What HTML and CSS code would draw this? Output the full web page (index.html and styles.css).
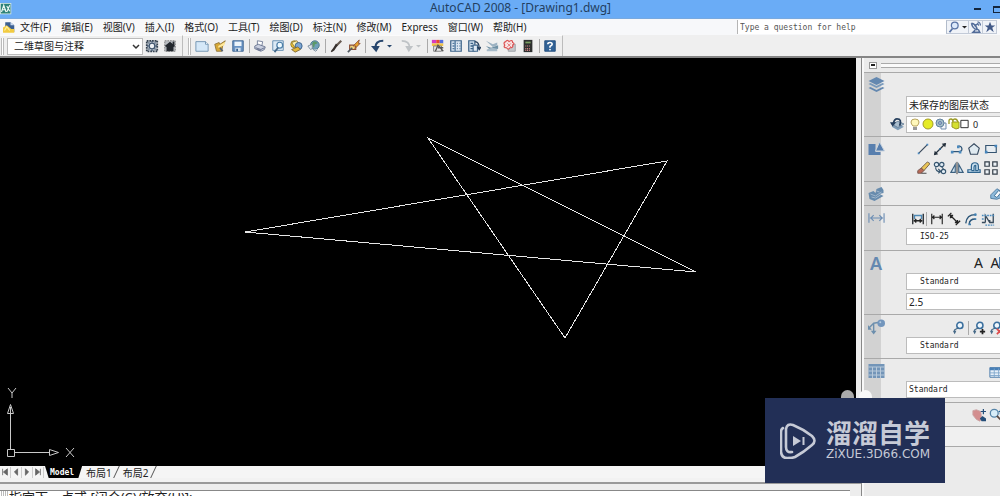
FILE: index.html
```html
<!DOCTYPE html>
<html lang="zh-CN">
<head>
<meta charset="utf-8">
<title>AutoCAD 2008 - [Drawing1.dwg]</title>
<link rel="stylesheet" href="styles.css">
</head>
<body>
<svg class="defs" aria-hidden="true">
  <symbol id="app" viewBox="0 0 16 16"><rect width="15" height="15" fill="#e4f0ec"/><path d="M1 1h13v13H1z" fill="#2b8178"/><path d="M2 12 5 3l3 9M9 4l4 7M9 12l4-9M3 9h5" fill="none" stroke="#eef8f5" stroke-width="1.5"/></symbol>
  <symbol id="dwg" viewBox="0 0 16 16"><path d="M3 1h7l5 4v9H3z" fill="#3b5f91"/><path d="M10 1v4h5" fill="#c9daf0"/><path d="m0 8 5-3 6 5h4v5H0z" fill="#f2cb41"/><path d="m2 12 3-5 4 5" fill="none" stroke="#fff2a6" stroke-width="1.5"/></symbol>
  <symbol id="gear" viewBox="0 0 16 16"><path d="M2 2h12v12H2z" fill="#c4ccd5" stroke="#354250" stroke-width="2" stroke-dasharray="2 1"/><circle cx="8" cy="8" r="3.3" fill="#edf1f5" stroke="#40566f" stroke-width="1.6"/><path d="M8 2v2M8 12v2M2 8h2M12 8h2M4 4l1 1M11 11l1 1M12 4l-1 1M5 11l-1 1" stroke="#40566f" stroke-width="1.5"/></symbol>
  <symbol id="home" viewBox="0 0 16 16"><path d="M2 2h12v12H2z" fill="#b9bdc2" stroke="#777" stroke-dasharray="2 1"/><path d="m2 8 6-5 6 5-2 1v5H4V9z" fill="#22272d"/><path d="M11 3h2v4h-2z" fill="#22272d"/></symbol>
  <symbol id="new" viewBox="0 0 16 16"><path d="M1 3h11l3 3v8H1z" fill="#d5e8f8" stroke="#6b8fae"/><path d="M12 3v3h3" fill="#fff" stroke="#6b8fae"/></symbol>
  <symbol id="open" viewBox="0 0 16 16"><path d="m2 6 5-2 1 2 6-4-3 6-1 6H4z" fill="#d7a837" stroke="#8e7339"/><path d="m6 8 8-5-1 4-7 3z" fill="#ffe89b"/><path d="m8 10 3 4" stroke="#536171" stroke-width="2"/></symbol>
  <symbol id="save" viewBox="0 0 16 16"><path d="M2 2h12v12H2z" fill="#6a94c4" stroke="#3b628e"/><path d="M4 3h8v5H4z" fill="#edf5fb"/><path d="M5 10h6v4H5z" fill="#d5e2ed"/><path d="M6 11h2v3H6z" fill="#315d8e"/></symbol>
  <symbol id="print" viewBox="0 0 16 16"><path d="m5 2 6 1-1 5-5-1z" fill="#fff" stroke="#6b7792"/><path d="m2 8 4-2 8 3-1 3-4 2-7-3z" fill="#c9cfdf" stroke="#67728e"/><path d="m3 10 6 2 4-2M5 12l4 1" fill="none" stroke="#5b6684"/></symbol>
  <symbol id="preview" viewBox="0 0 16 16"><path d="M2 2h12v11H2z" fill="#dceaf5" stroke="#5c88ad"/><circle cx="10" cy="7" r="3.3" fill="#eefaff" stroke="#4d7fa8" stroke-width="1.4"/><path d="m8 10-4 5" stroke="#426789" stroke-width="2"/></symbol>
  <symbol id="publish" viewBox="0 0 16 16"><circle cx="6" cy="6" r="4" fill="#f2c52f" stroke="#8d792c"/><path d="m3 4 6-2 3 5-5 3z" fill="#fff4b0" stroke="#917c38"/><circle cx="11" cy="8" r="4" fill="#7da5d2" stroke="#355c85"/><path d="m3 12 7-3 3 3-6 3z" fill="#e1b738" stroke="#7e6530"/></symbol>
  <symbol id="globe" viewBox="0 0 16 16"><circle cx="9" cy="7" r="5" fill="#6fa0b8" stroke="#49748a"/><path d="M7 3q4-1 5 2l-3 1-1 4-3-3z" fill="#5c9968"/><path d="m1 8 5-2v5l-2 1zM7 12l3 2 2-2" fill="#dfe7eb" stroke="#789"/></symbol>
  <symbol id="brush" viewBox="0 0 16 16"><path d="m14 2-6 6" stroke="#665a50" stroke-width="2.5"/><path d="m10 7-4 6-3 2-1-1 3-4 3-5z" fill="#36302d"/></symbol>
  <symbol id="block" viewBox="0 0 16 16"><path d="M3 7h7v5H3z" fill="#f0d47e" stroke="#8b5038" stroke-width="1.300"/><path d="m7 8 7-7-1 4h2l-6 6 1-3z" fill="#e9a22c" stroke="#8b5038"/><path d="m1 15 5-5" stroke="#4f5860" stroke-width="2"/></symbol>
  <symbol id="undo" viewBox="0 0 16 16"><path d="M14 2Q5 2 5 10" fill="none" stroke="currentColor" stroke-width="2.5"/><path d="M0 8h10l-4 7z" fill="currentColor"/></symbol>
  <symbol id="redo" viewBox="0 0 16 16"><path d="M2 2q9 0 9 8" fill="none" stroke="currentColor" stroke-width="2"/><path d="M6 8h9l-5 7z" fill="currentColor"/></symbol>
  <symbol id="caret" viewBox="0 0 8 16"><path d="M2 7h5L4.500 9.500z" fill="currentColor"/></symbol>
  <symbol id="props" viewBox="0 0 16 16"><path d="M1 1h5v4H1z" fill="#d53dc1"/><path d="M6 1h4v4H6z" fill="#e94632"/><path d="M10 1h4v4h-4z" fill="#536fe0"/><path d="M1 5h13v3H1z" fill="#f3c64a"/><path d="M3 8h9v6H3z" fill="#e8e8e8" stroke="#777"/><path d="m5 14 3-7 6 7M8 10h6" fill="none" stroke="#555" stroke-width="1.5"/></symbol>
  <symbol id="center" viewBox="0 0 16 16"><path d="M2 2h12v12H2z" fill="#dce7f2" stroke="#3d6388" stroke-width="1.4"/><path d="M7 2v12M4 5h2M4 8h2M4 11h2M9 5h1M12 5h1M9 8h1M12 8h1M9 11h1M12 11h1" stroke="#547ba0" stroke-width="1.6"/></symbol>
  <symbol id="palettes" viewBox="0 0 16 16"><path d="M2 2h7v12H2z" fill="#cfdfed" stroke="#3c6286" stroke-width="1.4"/><path d="M4 5h3M4 8h3M4 11h3" stroke="#3c6286" stroke-width="1.5"/><path d="M7 7h5v7H7z" fill="#dfe9f3" stroke="#43698d" stroke-width="1.4"/><path d="M9 3q5 0 5 8M12 9l2 3 2-3" fill="none" stroke="#263f5d" stroke-width="1.500"/></symbol>
  <symbol id="sheets" viewBox="0 0 16 16"><path d="m1 2 8 4 5-2v3l-5 2z" fill="#9cb2c2"/><path d="m1 8 6 2 8-3v4l-8 2z" fill="#6f91a5"/><path d="m2 12 6-2 6 1v3H2z" fill="#a6bac8"/></symbol>
  <symbol id="markup" viewBox="0 0 16 16"><path d="M6 6h8v8H6z" fill="#c5c8cc" stroke="#9a9da2"/><path d="M3 3q2-3 4 0 4-3 4 1 3 1 0 3 1 3-3 3-2 3-4 0-4 0-2-3-2-3 1-4z" fill="#f9e5e5" stroke="#dc5555" stroke-width="1.4"/><path d="m5 5 4 4M9 5 5 9" stroke="#e36b6b"/></symbol>
  <symbol id="calc" viewBox="0 0 16 16"><path d="M3 1h10v14H3z" fill="#2e3030"/><path d="M5 3h6v2H5z" fill="#7b9f62"/><path d="M5 8h6M5 11h6M5 13h6" stroke="#e88f8f" stroke-width="1.4" stroke-dasharray="1 1"/></symbol>
  <symbol id="help" viewBox="0 0 16 16"><path d="M2 2h12v12H2z" fill="#326397" stroke="#1f4b7c"/><path d="M5.500 6q0-2 2.500-2t2.500 2Q10.500 7 8 8.500V10" fill="none" stroke="#fff" stroke-width="1.8"/><circle cx="8" cy="12" r="1" fill="#fff"/></symbol>
  <symbol id="search" viewBox="0 0 16 16"><circle cx="9" cy="6" r="4.500" fill="#dbe8fa" stroke="#5873a5" stroke-width="1.7"/><path d="m6 10-4 5" stroke="#5873a5" stroke-width="2.4"/></symbol>
  <symbol id="comm" viewBox="0 0 16 16"><path d="M2 3q1 7 8 9M2 3q5 0 8 9M6 7l5-4M7 12l-3 3h9l-2-4" fill="none" stroke="#526c99" stroke-width="2"/><path d="M10 1q4 1 4 5M10 4l2 2" fill="none" stroke="#526c99" stroke-width="1.500"/></symbol>
  <symbol id="star" viewBox="0 0 16 16"><path d="m8 1 2 5h5l-4 3 2 6-5-4-5 4 2-6-4-3h5z" fill="#415987"/></symbol>
  <symbol id="layers" viewBox="0 0 16 16"><path d="m0 4 8-4 8 4-8 4z" fill="#6488b0"/><path d="m0 7 2-1 6 3 6-3 2 1-8 4z" fill="#7899bb"/><path d="m0 11 2-1 6 3 6-3 2 1-8 4z" fill="#6488b0"/></symbol>
  <symbol id="layerback" viewBox="0 0 16 16"><path d="m2 11 6-3 8 3-7 4z" fill="#7f9db8"/><path d="m2 8 7-3 7 3-7 4z" fill="#a9bdce" stroke="#678099"/><path d="M11 10q3-8-3-8-3 0-4 5" fill="none" stroke="#263f5d" stroke-width="2"/><path d="M0 6h7l-4 5z" fill="#263f5d"/></symbol>
  <symbol id="bulb" viewBox="0 0 12 12"><path d="M4 8Q2 6 2 4q0-3 4-3t4 3q0 2-2 4z" fill="#fff8bb" stroke="#b7a35d"/><path d="M4 9h4v3H4z" fill="#999"/></symbol>
  <symbol id="sun" viewBox="0 0 12 12"><circle cx="6" cy="6" r="5" fill="#e5eb25" stroke="#a29c26"/></symbol>
  <symbol id="freeze" viewBox="0 0 12 12"><path d="M6 5h5v6H6z" fill="#f4f6f8" stroke="#758fae"/><circle cx="5" cy="5" r="4" fill="#a5bfc7" stroke="#6383a0"/><circle cx="5" cy="5" r="1.500" fill="none" stroke="#687eb0"/></symbol>
  <symbol id="lock" viewBox="0 0 12 12"><path d="M1 6V3q0-2 2-2t2 3M5 5V3q0-2 2-2t3 3" fill="none" stroke="#9b9a25" stroke-width="1.300"/><path d="M4 4h7v6l-3 1-4-2z" fill="#d5df31" stroke="#9b9a25"/></symbol>
  <symbol id="swatch" viewBox="0 0 12 12"><path d="M2 2h8v8H2z" fill="#fff" stroke="#222"/></symbol>
  <symbol id="shapes" viewBox="0 0 16 16"><path d="M0 3h7v11H0zM8 11h4v3H5v-3z" fill="#587fae"/><path d="m11 1 5 9H7z" fill="#587fae" stroke="#c9d4df"/></symbol>
  <symbol id="line" viewBox="0 0 16 16"><path d="m3 13 10-10" stroke="#39495b" stroke-width="1.5"/><path d="M2 12h2v2H2zM12 2h2v2h-2z" fill="#4a8bc4"/></symbol>
  <symbol id="xline" viewBox="0 0 16 16"><path d="m2 14 12-12" stroke="#26323e" stroke-width="1.500"/><path d="m1 15 1-5 4 4zM15 1l-1 5-4-4z" fill="#26323e"/><path d="M7 7h2v2H7z" fill="#30699a"/></symbol>
  <symbol id="pline" viewBox="0 0 16 16"><path d="M2 11h9q4-1 2-5-1-2-4-1" fill="none" stroke="#315779" stroke-width="1.500"/><path d="M1 10h3v3H1zM10 10h3v3h-3zM8 4h3v3H8z" fill="#4c8abd"/></symbol>
  <symbol id="poly" viewBox="0 0 16 16"><path d="m8 2 6 5-2 7H4L2 7z" fill="#e0eaf0" stroke="#384b60" stroke-width="1.300"/></symbol>
  <symbol id="rect" viewBox="0 0 16 16"><path d="M2 4h12v8H2z" fill="#e7edf2" stroke="#345370" stroke-width="1.300"/><path d="M12 3h3v3h-3zM1 10h3v3H1z" fill="#4584bb"/></symbol>
  <symbol id="erase" viewBox="0 0 16 16"><path d="m6 8 7-7 3 2-7 8z" fill="#eac557" stroke="#6b5946"/><path d="m2 11 4-3 3 3-3 3H2z" fill="#b96957" stroke="#74534c"/><path d="M6 14h6" stroke="#333"/></symbol>
  <symbol id="copy" viewBox="0 0 16 16"><circle cx="4" cy="4" r="2.500" fill="#e2edf5" stroke="#37566f" stroke-width="1.300"/><circle cx="10" cy="4" r="2.500" fill="#e2edf5" stroke="#37566f" stroke-width="1.300"/><circle cx="12" cy="12" r="2.500" fill="#e2edf5" stroke="#37566f" stroke-width="1.300"/><path d="M3 7q0 5 5 5M6 9l3 3-3 2M10 7l2 2" fill="none" stroke="#37566f" stroke-width="1.300"/></symbol>
  <symbol id="mirror" viewBox="0 0 16 16"><path d="M6 4v9H1zM10 4v9h5z" fill="#d9eaf5" stroke="#3c607f" stroke-width="1.300"/><path d="M8 1v14" stroke="#222"/></symbol>
  <symbol id="offset" viewBox="0 0 16 16"><path d="M1 13v-3h4V6q0-4 4-4t4 4v4h2v3z" fill="#cae0ef" stroke="#2e648e" stroke-width="1.400"/><path d="M5 11h3V7q0-2 2-2v6h3" fill="none" stroke="#2e648e" stroke-width="1.300"/></symbol>
  <symbol id="array" viewBox="0 0 16 16"><path d="M1 1h5v5H1zM10 1h5v5h-5zM1 10h5v5H1zM10 10h5v5h-5z" fill="#edf2f6" stroke="#353f4a" stroke-width="1.400"/></symbol>
  <symbol id="solid" viewBox="0 0 16 16"><path d="m0 7 5-2 2 2 1-4 5-2 2 3v3l-4 1 4 2-9 5-5-2z" fill="#678bad"/><path d="m2 8 5 2 6-4M3 11l4 1 5-3M8 5l3 1" fill="none" stroke="#a1b7cc"/></symbol>
  <symbol id="pencil" viewBox="0 0 16 16"><path d="m2 9 7-7 5 3v7l-5 2-7-1z" fill="#8cb9da" stroke="#48779e"/><path d="m6 10 5-6 3 2-5 6z" fill="#f6f9fb" stroke="#376990"/></symbol>
  <symbol id="dimblue" viewBox="0 0 18 16"><path d="M1 3v10M17 3v10M2 8h14M6 5 3 8l3 3M12 5l3 3-3 3" fill="none" stroke="#6d8eb4" stroke-width="1.200"/></symbol>
  <symbol id="qdim" viewBox="0 0 16 16"><path d="M2 2v12M14 2v12" stroke="#23272b" stroke-width="1.500"/><path d="M3 4h10M4 3v5M12 3v5" stroke="#4d89b5" stroke-width="1.500"/><path d="M3 10h10M6 8l-2 2 2 2M10 8l2 2-2 2" fill="none" stroke="#222" stroke-width="1.500"/></symbol>
  <symbol id="dim" viewBox="0 0 16 16"><path d="M2 2v12M14 2v12M3 6h10M5 4 3 6l2 2M11 4l2 2-2 2" fill="none" stroke="#222" stroke-width="1.300"/></symbol>
  <symbol id="aligned" viewBox="0 0 16 16"><path d="m1 5 4-4M10 15l5-5M4 4l8 8M4 7V4h3M9 12h3V9" fill="none" stroke="#222" stroke-width="1.500"/></symbol>
  <symbol id="arc" viewBox="0 0 16 16"><path d="M2 13Q3 3 13 3M6 14q0-6 7-6" fill="none" stroke="#2d5678" stroke-width="1.600"/><circle cx="13" cy="3" r="1.500" fill="#4281b2"/><path d="M5 13h3v2H5zM12 7h2v2h-2z" fill="#4281b2"/></symbol>
  <symbol id="ordinate" viewBox="0 0 16 16"><path d="M5 12V4l5 8h4V2M5 12H1M10 12V9" fill="none" stroke="#394b5c" stroke-width="1.500"/><path d="M1 4h14M1 8h3M5 15h10" stroke="#4a8abd" stroke-width="1.500" stroke-dasharray="2 1"/></symbol>
  <symbol id="leader" viewBox="0 0 18 16"><path d="m1 9 5-5 6-1M6 4v10" fill="none" stroke="#6d8fad" stroke-width="1.500"/><path d="M0 6v5h4zM3 12h6l-3 4z" fill="#6d8fad"/><circle cx="14" cy="4" r="4" fill="#7396bd"/><circle cx="13" cy="3" r="1" fill="#b8cce0"/></symbol>
  <symbol id="callout" viewBox="0 0 16 16"><circle cx="9" cy="5" r="3.500" fill="#eff7fc" stroke="#3b6f9e" stroke-width="1.800"/><path d="m7 8-4 2v4" fill="none" stroke="#476a88" stroke-width="1.300"/><path d="M1 11h4l-2 4z" fill="#476a88"/></symbol>
  <symbol id="table" viewBox="0 0 16 16"><path d="M0 1h16v14H0z" fill="#7395b8"/><path d="M0 4h16M0 8h16M0 12h16M4 4v11M8 4v11M12 4v11" stroke="#b8c9da"/></symbol>
  <symbol id="minitable" viewBox="0 0 16 16"><path d="M1 3h14v11H1z" fill="#e7f0f9" stroke="#3e71a3"/><path d="M1 3h14v3H1z" fill="#477fb7"/><path d="M1 9h14M1 12h14M6 4v10M11 4v10" stroke="#7ea6ca"/></symbol>
  <symbol id="pan" viewBox="0 0 16 16"><path d="m1 3 4-1 5 2 1 8-2 3-4-2-4-5z" fill="#d38e8f" stroke="#c9a4a4"/><path d="M13 1v6M10 4h6" stroke="#244d78" stroke-width="1.400"/><path d="m9 12 3-3 4 3v3h-5z" fill="#244d78"/></symbol>
  <symbol id="zoomicon" viewBox="0 0 16 16"><circle cx="6" cy="6" r="4.500" fill="#d8edf8" stroke="#5684a8" stroke-width="1.500"/><path d="m9 9 5 5" stroke="#594741" stroke-width="2"/><path d="M13 2v5M11 4h5" stroke="#246497" stroke-width="1.400"/></symbol>
</svg>
<div class="window">
  <header class="titlebar">
    <svg class="i16"><use href="#app"/></svg>
    <h1>AutoCAD 2008 - [Drawing1.dwg]</h1>
    <div class="winbtns"><button aria-label="最小化"><span class="min"></span></button><button aria-label="最大化"><span class="max"></span></button></div>
  </header>
  <nav class="menubar">
    <svg class="docicon"><use href="#dwg"/></svg>
    <button>文件(F)</button><button>编辑(E)</button><button>视图(V)</button><button>插入(I)</button><button>格式(O)</button><button>工具(T)</button><button>绘图(D)</button><button>标注(N)</button><button>修改(M)</button><button>Express</button><button>窗口(W)</button><button>帮助(H)</button>
    <div class="infocenter">
      <input class="mono" type="text" aria-label="帮助搜索" placeholder="Type a question for help">
      <button class="find" aria-label="搜索"><svg class="i14"><use href="#search"/></svg><svg class="caret"><use href="#caret"/></svg></button><button aria-label="通讯中心"><svg class="i14"><use href="#comm"/></svg></button><button aria-label="收藏夹"><svg class="i14"><use href="#star"/></svg></button>
    </div>
  </nav>
  <div class="toolbars">
    <div class="toolbar">
      <span class="grip"></span>
      <div class="workspace"><select aria-label="工作空间"><option>二维草图与注释</option></select><svg viewBox="0 0 8 8"><path d="m1 2 3 3 3-3" fill="none" stroke="#333" stroke-width="1.500"/></svg></div>
      <button class="tool" aria-label="工作空间设置"><svg><use href="#gear"/></svg></button><button class="tool" aria-label="我的工作空间"><svg><use href="#home"/></svg></button>
    </div>
    <div class="toolbar standard">
      <span class="grip"></span>
      <button class="tool" aria-label="新建"><svg><use href="#new"/></svg></button><button class="tool" aria-label="打开"><svg><use href="#open"/></svg></button><button class="tool" aria-label="保存"><svg><use href="#save"/></svg></button><i class="sep"></i>
      <button class="tool" aria-label="打印"><svg><use href="#print"/></svg></button><button class="tool" aria-label="打印预览"><svg><use href="#preview"/></svg></button><button class="tool" aria-label="发布"><svg><use href="#publish"/></svg></button><button class="tool" aria-label="三维 DWF"><svg><use href="#globe"/></svg></button><i class="sep"></i>
      <button class="tool" aria-label="特性匹配"><svg><use href="#brush"/></svg></button><button class="tool" aria-label="块编辑器"><svg><use href="#block"/></svg></button><i class="sep"></i>
      <button class="tool history undo" aria-label="放弃"><svg><use href="#undo"/></svg><svg class="caret"><use href="#caret"/></svg></button><button class="tool history redo" aria-label="重做"><svg><use href="#redo"/></svg><svg class="caret"><use href="#caret"/></svg></button><i class="sep"></i>
      <button class="tool" aria-label="特性"><svg><use href="#props"/></svg></button><button class="tool" aria-label="设计中心"><svg><use href="#center"/></svg></button><button class="tool" aria-label="工具选项板"><svg><use href="#palettes"/></svg></button><button class="tool" aria-label="图纸集"><svg><use href="#sheets"/></svg></button><button class="tool" aria-label="标记集"><svg><use href="#markup"/></svg></button><button class="tool" aria-label="计算器"><svg><use href="#calc"/></svg></button><i class="sep"></i>
      <button class="tool" aria-label="帮助"><svg><use href="#help"/></svg></button>
    </div>
  </div>
  <div class="main">
    <main class="document">
      <div class="canvas">
        <svg class="drawing" role="img" aria-label="五角星"><path d="M428 80 696 214 245 174 667 103 565 280Z" fill="none" stroke="#e6e6e6"/></svg>
        <svg class="ucs" viewBox="0 0 80 80"><g fill="none" stroke="#c9c9c9"><path d="M7.500 64.500h7v7h-7zM10.500 64V22M14.500 67.500H50M7.500 28.500l3-9 3 9zM49.500 64.500l9 3-9 3zM8 3l4 5 4-5M12 8v5M66 63l8 9M74 63l-8 9"/></g></svg>
      </div>
      <div class="tabs">
        <div class="nav"><button aria-label="第一个"><svg viewBox="0 0 10 10"><path d="M2 1v8M8 1v8L3 5z"/></svg></button><button aria-label="上一个"><svg viewBox="0 0 10 10"><path d="M7 1v8L3 5z"/></svg></button><button aria-label="下一个"><svg viewBox="0 0 10 10"><path d="M3 1v8l4-4z"/></svg></button><button aria-label="最后一个"><svg viewBox="0 0 10 10"><path d="M2 1v8l5-4zM8 1v8"/></svg></button></div>
        <button class="model mono">Model</button><button class="layout">布局1</button><i class="slash"></i><button class="layout">布局2</button><i class="slash"></i>
      </div>
      <div class="command"><div class="log"><span class="grip"></span><span class="grip"></span><p>指定下一点或 [闭合(C)/放弃(U)]:</p></div></div>
    </main>
    <aside class="dock">
      <div class="dockhead"><button aria-label="最小化面板"></button><span></span></div>
      <section class="panel layerpanel"><svg class="mark"><use href="#layers"/></svg><div class="body">
        <select class="field" aria-label="图层状态"><option>未保存的图层状态</option></select>
        <div class="layerrow"><button class="tool" aria-label="上一个图层"><svg><use href="#layerback"/></svg></button><button class="field layer" aria-label="图层 0"><svg><use href="#bulb"/></svg><svg><use href="#sun"/></svg><svg><use href="#freeze"/></svg><svg><use href="#lock"/></svg><svg class="sw"><use href="#swatch"/></svg><span>0</span></button></div>
      </div></section>
      <section class="panel drawpanel"><svg class="mark"><use href="#shapes"/></svg><div class="body">
        <div class="row"><button aria-label="直线"><svg><use href="#line"/></svg></button><button aria-label="构造线"><svg><use href="#xline"/></svg></button><button aria-label="多段线"><svg><use href="#pline"/></svg></button><button aria-label="正多边形"><svg><use href="#poly"/></svg></button><button aria-label="矩形"><svg><use href="#rect"/></svg></button></div>
        <div class="row"><button aria-label="删除"><svg><use href="#erase"/></svg></button><button aria-label="复制"><svg><use href="#copy"/></svg></button><button aria-label="镜像"><svg><use href="#mirror"/></svg></button><button aria-label="偏移"><svg><use href="#offset"/></svg></button><button aria-label="阵列"><svg><use href="#array"/></svg></button></div>
      </div></section>
      <section class="panel slim"><svg class="mark"><use href="#solid"/></svg><div class="body"><div class="row end"><button aria-label="编辑"><svg><use href="#pencil"/></svg></button></div></div></section>
      <section class="panel dims"><svg class="mark"><use href="#dimblue"/></svg><div class="body">
        <div class="row"><button aria-label="快速标注"><svg><use href="#qdim"/></svg></button><i class="sep"></i><button aria-label="线性"><svg><use href="#dim"/></svg></button><button aria-label="对齐"><svg><use href="#aligned"/></svg></button><button aria-label="弧长"><svg><use href="#arc"/></svg></button><button aria-label="坐标"><svg><use href="#ordinate"/></svg></button></div>
        <select class="field mono inset" aria-label="标注样式"><option>ISO-25</option></select>
      </div></section>
      <section class="panel text"><span class="mark letter">A</span><div class="body">
        <div class="row end"><button class="glyph" aria-label="多行文字">A</button><button class="glyph" aria-label="单行文字">A<i></i></button></div>
        <select class="field mono inset" aria-label="文字样式"><option>Standard</option></select>
        <input class="field" aria-label="文字高度" value="2.5">
      </div></section>
      <section class="panel"><svg class="mark"><use href="#leader"/></svg><div class="body">
        <div class="row end"><button aria-label="多重引线"><svg><use href="#callout"/></svg></button><i class="sep"></i><button aria-label="添加引线"><svg viewBox="0 0 16 16"><use href="#callout"/><path d="M12 9v6M9 12h6" stroke="#222" stroke-width="2"/></svg></button><button aria-label="删除引线"><svg viewBox="0 0 16 16"><use href="#callout"/><path d="m9 9 6 6M15 9l-6 6" stroke="#dd4c4c" stroke-width="2"/></svg></button></div>
        <select class="field mono inset" aria-label="引线样式"><option>Standard</option></select>
      </div></section>
      <section class="panel"><svg class="mark"><use href="#table"/></svg><div class="body">
        <div class="row end"><button aria-label="表格"><svg><use href="#minitable"/></svg></button></div>
        <select class="field mono" aria-label="表格样式"><option>Standard</option></select>
      </div></section>
      <section class="panel slim"><span class="mark"></span><div class="body"><div class="row end"><button aria-label="平移"><svg><use href="#pan"/></svg></button><button aria-label="缩放"><svg><use href="#zoomicon"/></svg></button></div></div></section>
      <div class="blank"></div>
    </aside>
  </div>
  <div class="badge">
    <i class="dot grey"></i><i class="dot white"></i>
    <svg viewBox="0 0 36 36"><g fill="none" stroke="#c6cad6" stroke-width="2.600" stroke-linecap="round" stroke-linejoin="round"><path d="M3 5Q1 6 1 9v20q1 7 8 6"/><path d="M12 29q-6 1-6-5V6q1-6 7-4 10 4 19 11 5 5 0 9-8 7-17 12-3 1-6 1"/></g><path d="m13 13 8 5-8 5z" fill="#c6cad6"/><path d="M23.500 14v8" stroke="#c6cad6" stroke-width="2"/></svg>
    <div><strong>溜溜自学</strong><span>ZiXUE.3D66.COM</span></div>
  </div>
</div>
</body>
</html>
```
FILE: styles.css
```css
* { box-sizing: border-box; }
body { margin: 0; background: #ededed; font-family: "Noto Sans", "Noto Sans CJK SC", sans-serif; font-size: 10px; color: #222; }
button, input, select { font: inherit; color: inherit; margin: 0; padding: 0; border: 0; background: none; border-radius: 0; appearance: none; outline-offset: -1px; }
button { display: flex; align-items: center; justify-content: center; white-space: nowrap; }
svg { display: block; flex: none; }
.defs { position: absolute; width: 0; height: 0; }
.mono { font-family: "DejaVu Sans Mono", "Noto Sans CJK SC", monospace; font-size: 8px; }
.window { position: relative; display: flex; flex-direction: column; height: 100vh; overflow: hidden; }

.titlebar { display: flex; align-items: center; height: 19px; flex: none; background: #6aacf6; border-bottom: 1px solid #78a9df; overflow: hidden; }
.titlebar h1 { flex: 1; margin: 0; padding-left: 58px; text-align: center; font-size: 12px; line-height: 16px; padding-bottom: 2px; font-weight: 400; color: #233f61; }
.i16 { width: 12px; height: 12px; }
.winbtns { display: flex; gap: 8px; margin-right: -3px; }
.winbtns button { width: 12px; height: 12px; }
.min { width: 7px; height: 2px; background: #14253b; }
.max { width: 8px; height: 7px; border: 1px solid #14253b; border-top-width: 2px; }

.menubar { display: flex; align-items: center; height: 16px; flex: none; gap: 10px; background: #f7f8fa; padding-left: 3px; }
.menubar > button { height: 16px; line-height: 16px; }
.docicon { width: 12px; height: 13px; margin-right: -5px; }
.infocenter { display: flex; align-items: center; width: 263px; height: 15px; margin-left: auto; }
.infocenter input { width: 209px; height: 14px; padding-left: 2px; background: #fff; border-left: 1px solid #b5b5b5; }
.infocenter input::placeholder { color: #555; opacity: 1; }
.infocenter button { width: 14px; height: 14px; border: 1px solid #c3cbd8; border-left: 0; background: #f0f3f8; }
.infocenter .find { width: 23px; border-left: 1px solid #b2bccb; }
.i14 { width: 12px; height: 12px; }
.caret { width: 8px; height: 16px; }

.toolbars { display: flex; height: 23px; flex: none; background: #efefef; border-bottom: 2px solid #858585; }
.toolbar { display: flex; align-items: center; height: 21px; border-right: 1px solid #bcbcbc; border-top: 1px solid #fbfbfb; padding-right: 3px; }
.grip { flex: none; width: 3px; height: 17px; border: solid #bbb; border-width: 0 1px; background: #fff; margin: 0 3px 0 1px; }
.standard { padding-right: 3px; }
.standard .grip { margin: 0 2px 0 5px; }
.workspace { position: relative; width: 136px; }
.workspace select { display: block; width: 136px; height: 17px; padding-left: 6px; background: #fff; border: 1px solid #bbb; }
.workspace svg { position: absolute; right: 3px; top: 5px; width: 8px; height: 8px; pointer-events: none; }
.tool { width: 18px; height: 18px; }
.tool svg { width: 14px; height: 14px; }
.tool .caret { width: 8px; height: 16px; }
.history { width: 29px; }
.undo { color: #27466d; }
.redo { color: #bfc3c6; }
.sep { flex: none; width: 1px; height: 14px; margin: 0 1px; background: #aaa; }
.standard .sep { margin: 0 1px 0 2px; }

.main { display: flex; flex: 1; min-height: 0; }
.document { display: flex; flex-direction: column; flex: 1; min-width: 0; border-right: 1px solid #888; }
.canvas { position: relative; flex: 1; min-height: 0; margin-right: 5px; background: #000; overflow: hidden; }
.drawing { width: 100%; height: 100%; shape-rendering: crispEdges; }
.ucs { position: absolute; left: 0; bottom: 1px; width: 80px; height: 80px; }
.tabs { display: flex; align-items: center; flex: none; height: 12px; background: #f5f5f5; }
.nav { display: flex; margin-right: 1px; }
.nav button { width: 11px; height: 11px; border-right: 1px solid #ccc; }
.nav svg { width: 8px; height: 8px; fill: #666; stroke: #666; }
.model { height: 12px; padding: 0 8px 0 5px; background: #000; color: #fff; clip-path: polygon(0 0, 100% 0, 90% 100%, 10% 100%); font-weight: 700; }
.layout { height: 12px; padding-left: 4px; }
.slash { width: 1px; height: 12px; margin: 0 2px 0 4px; background: #555; transform: skewX(-25deg); }
.command { flex: none; height: 18px; overflow: hidden; border-top: 4px solid #f2f2f2; background: #ededed; padding: 0 11px 0 0; }
.command::before { content: ""; display: block; height: 2px; background: #999; margin-right: -11px; }
.log { display: flex; align-items: flex-start; margin-top: 6px; height: 20px; border-top: 1px solid #888; background: #fff; }
.log .grip { margin: 0 0 0 1px; height: 20px; }
.log p { margin: -2px 0 0; font-size: 13px; line-height: 16px; padding-left: 1px; }

.dock { flex: none; width: 138px; background: #ebebeb; border-left: 2px solid #f8f8f8; overflow: hidden; }
.dockhead { display: flex; align-items: center; gap: 4px; height: 14px; padding-left: 5px; }
.dockhead button { width: 8px; height: 7px; border: 1px solid #999; background: linear-gradient(#222, #222) center / 4px 2px no-repeat #fff; }
.dockhead span { flex: 1; height: 5px; border: solid #aaa; border-width: 1px 0; background: #fafafa; }
.panel { display: grid; grid-template-columns: 24px 1fr; align-items: start; border-top: 1px solid #a9a9a9; background: linear-gradient(90deg, #d2d2d2 17px, transparent 17px); min-height: 44px; }
.mark { width: 17px; height: 16px; margin: 4px 0 0 4px; }
.letter { font: 600 18px/16px "Noto Sans", sans-serif; color: #6488b0; padding-left: 2px; }
.body { display: flex; flex-direction: column; min-width: 0; overflow: hidden; }
.field { display: block; width: calc(100% - 18px); height: 17px; margin: 0 0 3px 18px; padding-left: 2px; border: 1px solid #bcbcbc; border-right: 0; background: #fff; flex: none; }
.inset { padding-left: 13px; }
.row { display: flex; align-items: center; height: 19px; padding-left: 26px; }
.row button { width: 17px; height: 18px; flex: none; }
.row svg { width: 14px; height: 14px; }
.end { justify-content: flex-end; padding-left: 0; margin-right: -4px; }
.layerpanel .body { padding-top: 23px; }
.layerrow { display: flex; align-items: center; height: 18px; margin: -1px 0 3px; }
.layerrow .tool { flex: none; }
.layerrow .field { flex: 1; display: flex; justify-content: flex-start; gap: 1px; margin: 0; }
.layer svg { width: 12px; height: 12px; }
.layer .sw { width: 11px; margin-left: -2px; }
.layer span { padding-left: 2px; font-size: 9px; }
.drawpanel { min-height: 45px; }
.drawpanel .body { padding: 2px 0 4px; }
.slim { min-height: 24px; }
.slim .body { padding-top: 2px; }
.dims { min-height: 45px; }
.dims .row { padding-left: 21px; }
.dims .body, .panel:not([class*=" "]) .body { padding-top: 3px; }
.dims .sep { margin: 0 1px 0 0; }
.text { min-height: 64px; }
.text .body { padding-top: 3px; }
.glyph { font-size: 14px; line-height: 18px; padding-bottom: 2px; }
.row .glyph { height: 20px; }
.glyph i { width: 1px; height: 12px; background: #4778a8; }
.blank { height: 21px; border: solid #a9a9a9; border-width: 1px 0; background: #f0f0f0; }

.badge { position: absolute; right: 55px; bottom: 13px; display: flex; align-items: center; gap: 10px; width: 180px; height: 85px; padding-left: 15px; background: #222f56; color: #c6cad6; }
.badge svg { width: 36px; height: 36px; }
.badge div { display: flex; flex-direction: column; align-items: flex-start; padding-bottom: 6px; }
.badge strong { font: 700 26px/32px "Noto Sans CJK SC", sans-serif; }
.badge span { font: 12px/12px "DejaVu Sans", sans-serif; white-space: nowrap; }
.dot { position: absolute; top: -8px; width: 13px; height: 8px; border-radius: 7px 7px 0 0; }
.grey { left: 76px; background: #aaa; }
.white { left: 94px; background: #f8f8f8; }
```
